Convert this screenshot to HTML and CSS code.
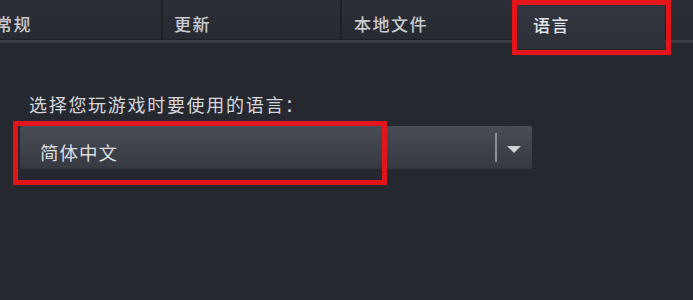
FILE: index.html
```html
<!DOCTYPE html>
<html lang="zh-CN">
<head>
<meta charset="utf-8">
<link rel="stylesheet" href="styles.css">
</head>
<body>
<div class="page">
  <div class="tabs">
    <div class="tab tab-first">常规</div>
    <div class="tab">更新</div>
    <div class="tab tab-third">本地文件</div>
    <div class="tab tab-active">语言
      <span class="mark mark-tab"></span>
    </div>
    <div class="tab-rest"></div>
  </div>
  <div class="content">
    <div class="label">选择您玩游戏时要使用的语言：</div>
    <div class="select">
      <span class="select-value">简体中文</span>
      <span class="select-sep"></span>
      <span class="select-arrow"></span>
      <span class="mark mark-select"></span>
    </div>
  </div>
</div>
</body>
</html>
```
FILE: styles.css
```css
html, body {
  margin: 0;
  padding: 0;
  background: #262830;
}
body {
  width: 693px;
  height: 300px;
  overflow: hidden;
  font-family: "Noto Sans CJK SC", "Noto Sans", sans-serif;
  color: #d4d6da;
}
.page {
  position: relative;
  height: 300px;
}
.tabs {
  display: flex;
  height: 40px;
  border-bottom: 3px solid #3a3d44;
  margin-left: -16px;
}
.tab {
  position: relative;
  box-sizing: border-box;
  width: 179px;
  height: 40px;
  padding-left: 11px;
  padding-top: 8px;
  display: flex;
  align-items: center;
  font-size: 17px;
  font-weight: 500;
  letter-spacing: 1.5px;
  color: #c9cbd0;
  background: linear-gradient(#2c2f37, #282a31);
  border-right: 2px solid #1d1f24;
  border-bottom: 1px solid #1d1f24;
}
.tab-first { width: 179px; }
.tab-third { width: 171px; padding-left: 12px; border-right: none; }
.tab-active {
  width: 152px;
  height: 49px;
  margin-bottom: -9px;
  padding-left: 20px;
  padding-bottom: 9px;
  background: linear-gradient(#33363e, #2d3037);
  border-right: none;
  border-bottom: none;
  color: #e4e6ea;
  z-index: 1;
}
.tab-rest {
  flex: 1;
  background: linear-gradient(#2c2f37, #282a31);
  border-left: 2px solid #1d1f24;
}
.content {
  padding: 49px 0 0 29px;
}
.label {
  font-size: 18px;
  letter-spacing: 1.7px;
  line-height: 24px;
  color: #d6d8dc;
}
.select {
  position: relative;
  box-sizing: border-box;
  margin: 10px 0 0 -9px;
  width: 512px;
  height: 43px;
  display: flex;
  align-items: center;
  background: linear-gradient(#484c55, #363940);
  border-radius: 2px;
}
.select-value {
  flex: 1;
  padding-left: 20px;
  padding-top: 8px;
  font-size: 18.5px;
  letter-spacing: 1px;
  color: #dcdee2;
}
.select-sep {
  width: 2px;
  height: 29px;
  background: #8d9098;
}
.select-arrow {
  width: 0;
  height: 0;
  margin: 4px 11px 0 10px;
  border-left: 7px solid transparent;
  border-right: 7px solid transparent;
  border-top: 7px solid #d0d2d6;
}
.mark {
  position: absolute;
  box-sizing: border-box;
  border: 5px solid #e3141a;
  pointer-events: none;
}
.mark-tab {
  left: -1px;
  top: 0;
  width: 159px;
  height: 55px;
}
.mark-select {
  left: -7px;
  top: -5px;
  width: 374px;
  height: 64px;
}
```
